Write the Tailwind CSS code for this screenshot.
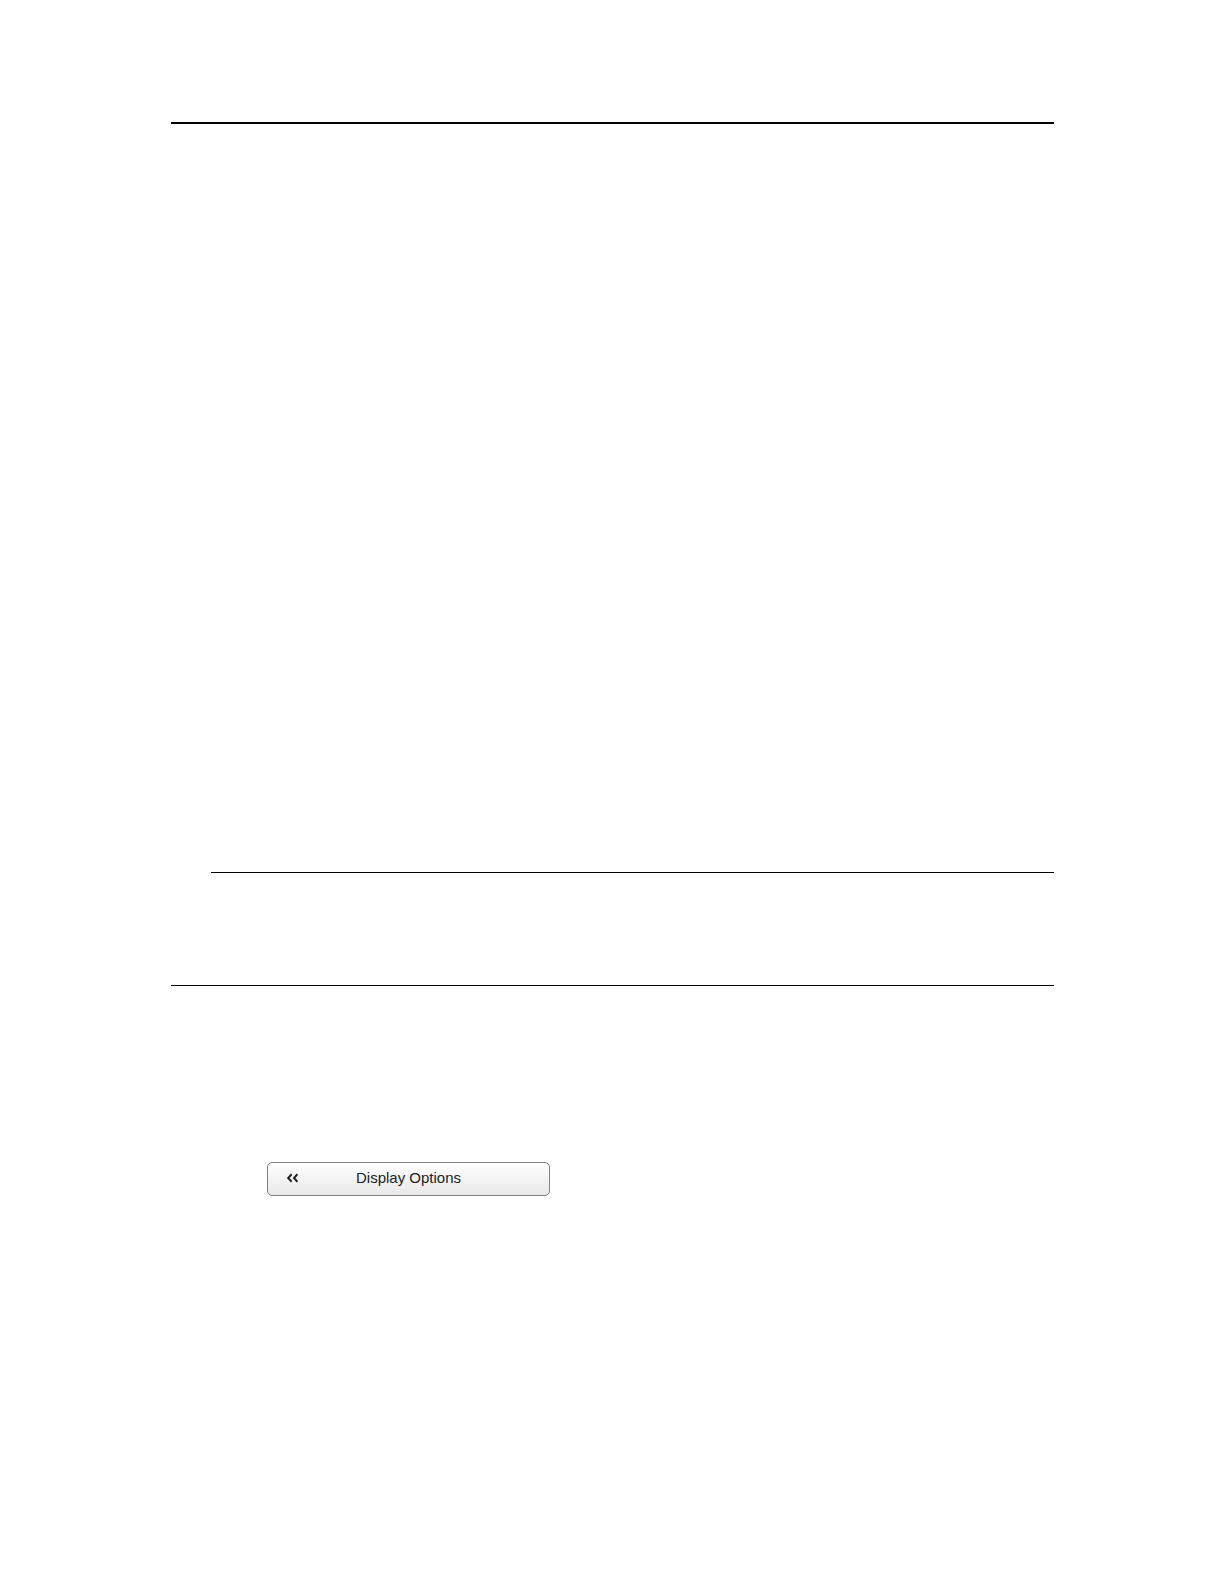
<!DOCTYPE html>
<html lang="en">
<head>
<meta charset="utf-8">
<meta name="viewport" content="width=device-width, initial-scale=1">
<title>Display Options</title>
<script src="https://cdn.jsdelivr.net/npm/@tailwindcss/browser@4"></script>
</head>
<body class="min-h-screen bg-white font-['Liberation_Sans',Arial,sans-serif] text-[#222]">
<main class="pt-[122px] pr-[170px] pl-[171px]">
  <hr class="border-t-2 border-black">
  <hr class="mt-[748px] ml-10 border-t border-black">
  <hr class="mt-28 border-t border-black">
  <button type="button" class="mt-44 ml-24 grid h-[34px] w-[283px] max-w-full grid-cols-[1fr_auto_1fr] items-center rounded-[5px] border border-[#808080] bg-linear-to-b from-white to-[#e8e8e8] px-[18px] pb-[2px] text-[15px] leading-5">
    <svg class="h-[10px] w-[12px]" viewBox="0 0 12 10" fill="none" stroke="#222" stroke-width="2" aria-hidden="true">
      <path d="M5.6 1.3 2.2 5l3.4 3.7M11.4 1.3 8 5l3.4 3.7"/>
    </svg>
    <span>Display Options</span>
  </button>
</main>
</body>
</html>
